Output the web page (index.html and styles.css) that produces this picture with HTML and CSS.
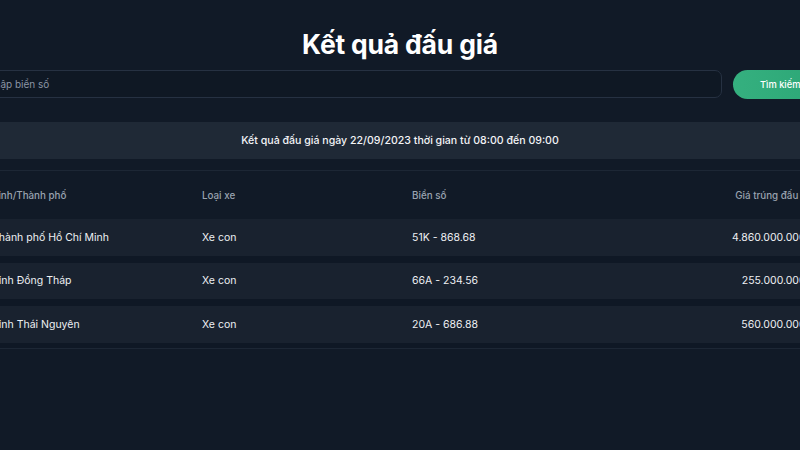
FILE: index.html
```html
<!DOCTYPE html>
<html lang="vi">
<head>
<meta charset="utf-8">
<title>Kết quả đấu giá</title>
<link rel="stylesheet" href="styles.css">
</head>
<body>
<main class="page">
  <h1 class="title">Kết quả đấu giá</h1>
  <form class="search">
    <input class="search-input" type="text" placeholder="Nhập biển số">
    <button class="search-btn" type="button">Tìm kiếm</button>
  </form>
  <div class="band">Kết quả đấu giá ngày 22/09/2023 thời gian từ 08:00 đến 09:00</div>
  <div class="results">
    <div class="thead">
      <div class="cell">Tỉnh/Thành phố</div>
      <div class="cell">Loại xe</div>
      <div class="cell">Biển số</div>
      <div class="cell num">Giá trúng đấu giá</div>
    </div>
    <div class="tbody">
      <div class="row">
        <div class="cell">Thành phố Hồ Chí Minh</div>
        <div class="cell">Xe con</div>
        <div class="cell">51K - 868.68</div>
        <div class="cell num">4.860.000.000 đ</div>
      </div>
      <div class="row">
        <div class="cell">Tỉnh Đồng Tháp</div>
        <div class="cell">Xe con</div>
        <div class="cell">66A - 234.56</div>
        <div class="cell num">255.000.000 đ</div>
      </div>
      <div class="row">
        <div class="cell">Tỉnh Thái Nguyên</div>
        <div class="cell">Xe con</div>
        <div class="cell">20A - 686.88</div>
        <div class="cell num">560.000.000 đ</div>
      </div>
    </div>
  </div>
</main>
</body>
</html>
```
FILE: styles.css
```css
html, body {
  margin: 0;
  padding: 0;
}
body {
  background: #111a27;
  font-family: Inter, "Noto Sans", "Liberation Sans", sans-serif;
  color: #e5e7eb;
  overflow: hidden;
  display: flex;
  justify-content: center;
  min-height: 450px;
}
.page {
  width: 870px;
  flex-shrink: 0;
}
.title {
  margin: 27px 0 9px;
  font-size: 26.5px;
  line-height: 34px;
  font-weight: 700;
  color: #ffffff;
  text-align: center;
  letter-spacing: -0.2px;
}
.search {
  display: flex;
  gap: 11px;
  height: 28px;
  margin: 0 8px;
}
.search-input {
  flex: 1;
  box-sizing: border-box;
  height: 28px;
  background: #0f1824;
  border: 1px solid #263142;
  border-radius: 7px;
  padding: 0 13px;
  font-family: inherit;
  font-size: 10px;
  color: #e5e7eb;
  outline: none;
}
.search-input::placeholder {
  color: #8b95a4;
}
.search-btn {
  width: 94px;
  height: 29px;
  border: none;
  border-radius: 15px;
  background: linear-gradient(90deg, #35b07f, #2ca676);
  color: #ffffff;
  font-family: inherit;
  font-size: 9.3px;
  font-weight: 500;
  text-align: left;
  padding: 0 0 0 27px;
}
.band {
  margin-top: 24px;
  height: 37px;
  background: #1f2936;
  display: flex;
  align-items: center;
  justify-content: center;
  font-size: 10.6px;
  font-weight: 500;
  color: #f3f4f6;
}
.results {
  margin-top: 11px;
  border-top: 1px solid #1d2735;
  border-bottom: 1px solid #1d2735;
}
.thead, .row {
  display: grid;
  grid-template-columns: 210px 210px 210px 1fr;
  padding: 0 20px 0 27px;
  align-items: center;
}
.thead {
  height: 48px;
  font-size: 9.8px;
  font-weight: 500;
  color: #9aa3b0;
}
.tbody {
  display: flex;
  flex-direction: column;
  gap: 7px;
  padding-bottom: 5.5px;
  background: #0f1825;
}
.row {
  height: 36.5px;
  background: #19222f;
  font-size: 10.5px;
  color: #eef0f3;
}
.cell {
  white-space: nowrap;
}
.num {
  text-align: right;
}
```
